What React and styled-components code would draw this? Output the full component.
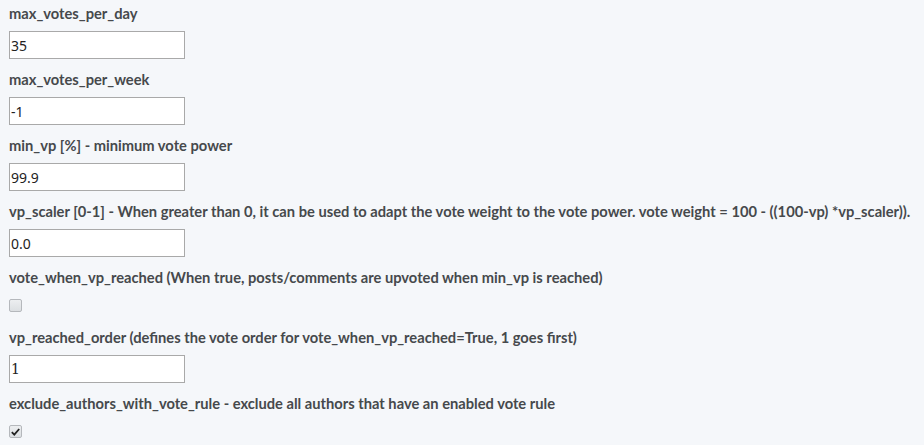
import styled, { createGlobalStyle } from "styled-components";

const GlobalStyle = createGlobalStyle`
  html, body {
    margin: 0;
    padding: 0;
    background: #f5f7fa;
  }
`;

const fields = [
  { name: "max_votes_per_day", type: "text", value: "35" },
  { name: "max_votes_per_week", type: "text", value: "-1" },
  { name: "min_vp [%] - minimum vote power", type: "text", value: "99.9" },
  {
    name: "vp_scaler [0-1] - When greater than 0, it can be used to adapt the vote weight to the vote power. vote weight = 100 - ((100-vp) *vp_scaler)).",
    type: "text",
    value: "0.0",
  },
  {
    name: "vote_when_vp_reached (When true, posts/comments are upvoted when min_vp is reached)",
    type: "check",
    value: false,
  },
  {
    name: "vp_reached_order (defines the vote order for vote_when_vp_reached=True, 1 goes first)",
    type: "text",
    value: "1",
    serif: true,
  },
  {
    name: "exclude_authors_with_vote_rule - exclude all authors that have an enabled vote rule",
    type: "check",
    value: true,
  },
];

export default function App() {
  return (
    <>
      <GlobalStyle />
      <Form>
        {fields.map((f) => (
          <Group key={f.name} $check={f.type === "check"}>
            <Label>{f.name}</Label>
            {f.type === "check" ? (
              <CheckBox>
                <input type="checkbox" defaultChecked={f.value} />
                <span>
                  {f.value && (
                    <svg width="9" height="8" viewBox="0 0 9 8">
                      <path d="M0.8 4.2 L3.3 6.6 L8.2 1" fill="none" stroke="#222" strokeWidth="1.8" />
                    </svg>
                  )}
                </span>
              </CheckBox>
            ) : (
              <Input type="text" defaultValue={f.value} $serif={f.serif} />
            )}
          </Group>
        ))}
      </Form>
    </>
  );
}

const Form = styled.div`
  display: flex;
  flex-direction: column;
  padding: 3px 9px 0 9px;
  font-family: "Lato", "Liberation Sans", sans-serif;
`;

const Group = styled.div`
  display: flex;
  flex-direction: column;
  align-items: flex-start;
  gap: ${(p) => (p.$check ? "12px" : "8px")};
  margin-bottom: ${(p) => (p.$check ? "15px" : "10px")};
`;

const Label = styled.label`
  font-size: 14.7px;
  font-weight: 700;
  line-height: 20px;
  color: #46494c;
  white-space: nowrap;
`;

const Input = styled.input`
  box-sizing: border-box;
  width: 176px;
  height: 28px;
  margin: 0;
  padding: 0 1px;
  border: 1px solid #a9a9a9;
  background: #fff;
  color: #222;
  font-family: ${(p) => (p.$serif ? '"DejaVu Serif", serif' : '"Noto Sans", "DejaVu Sans", sans-serif')};
  font-size: 14px;
  outline: none;
`;

const CheckBox = styled.label`
  position: relative;
  display: block;
  width: 13px;
  height: 13px;

  input {
    position: absolute;
    opacity: 0;
    margin: 0;
    width: 13px;
    height: 13px;
  }

  span {
    box-sizing: border-box;
    display: flex;
    align-items: center;
    justify-content: center;
    width: 13px;
    height: 13px;
    border: 1px solid #b5b8bc;
    border-radius: 2px;
    background: linear-gradient(#eceef0, #dcdfe2);
  }
`;
